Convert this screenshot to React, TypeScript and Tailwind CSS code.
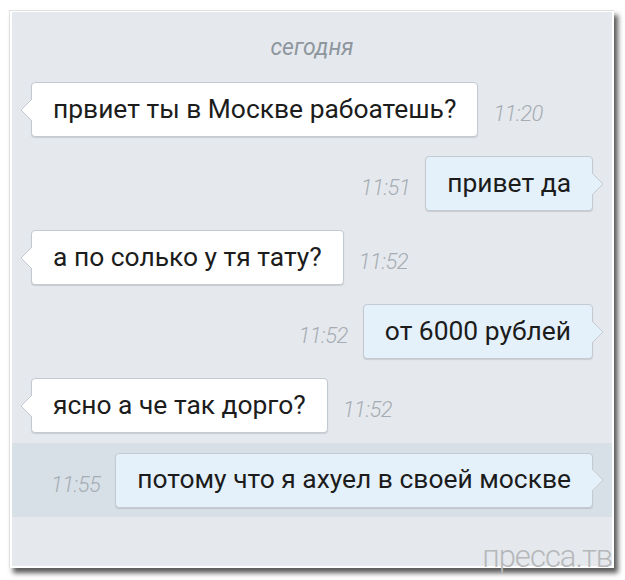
import React from "react";

type Msg = { text: string; time: string; out?: boolean };

const messages: Msg[] = [
  { text: "првиет ты в Москве рабоатешь?", time: "11:20" },
  { text: "привет да", time: "11:51", out: true },
  { text: "а по солько у тя тату?", time: "11:52" },
  { text: "от 6000 рублей", time: "11:52", out: true },
  { text: "ясно а че так дорго?", time: "11:52" },
];

function Tail({ out }: { out?: boolean }) {
  if (out) {
    return (
      <svg
        width="12"
        height="22"
        viewBox="0 0 12 22"
        className="absolute right-[-12px] top-1/2 -translate-y-1/2"
      >
        <path d="M0,0 L11,11 L0,22 Z" fill="#e4f1fa" />
        <path d="M0,0 L11,11 L0,22" fill="none" stroke="#c3cad1" strokeWidth="1" />
      </svg>
    );
  }
  return (
    <svg
      width="12"
      height="22"
      viewBox="0 0 12 22"
      className="absolute left-[-12px] top-1/2 -translate-y-1/2"
    >
      <path d="M12,0 L1,11 L12,22 Z" fill="#ffffff" />
      <path d="M12,0 L1,11 L12,22" fill="none" stroke="#c3cad1" strokeWidth="1" />
    </svg>
  );
}

function Bubble({ text, out }: { text: string; out?: boolean }) {
  return (
    <div
      className={
        out
          ? "relative h-[55px] flex items-center px-[21px] rounded-[4px] border border-[#c3cad1] bg-[#e4f1fa] shadow-[0_1px_1px_rgba(0,0,0,0.12)] text-[26.4px] text-[#1c1c1c] whitespace-nowrap"
          : "relative h-[55px] flex items-center px-[21px] rounded-[4px] border border-[#c3cad1] bg-white shadow-[0_1px_1px_rgba(0,0,0,0.12)] text-[26.4px] text-[#1c1c1c] whitespace-nowrap"
      }
    >
      {text}
      <Tail out={out} />
    </div>
  );
}

function Time({ t }: { t: string }) {
  return (
    <span className="pt-[8px] text-[22px] italic font-light text-[#a5acb3] tracking-[-0.5px]">
      {t}
    </span>
  );
}

function Row({ m }: { m: Msg }) {
  if (m.out) {
    return (
      <div className="flex items-center justify-end gap-[15px] pr-[19px]">
        <Time t={m.time} />
        <Bubble text={m.text} out />
      </div>
    );
  }
  return (
    <div className="flex items-center gap-[15px] pl-[19px]">
      <Bubble text={m.text} />
      <Time t={m.time} />
    </div>
  );
}

export default function App() {
  return (
    <div className="w-[625px] h-[580px] bg-white overflow-hidden font-[Roboto]">
      <div className="ml-[9px] mt-[10px] w-[605px] h-[558px] bg-white border-l border-t border-[#e0e0e0] pl-[2px] pt-[1px] shadow-[4px_5px_5px_rgba(0,0,0,0.65)]">
        <div className="relative w-[600px] h-[554px] bg-[#e5e9ed] flex flex-col">
          <div className="pt-[23px] text-center text-[23px] leading-[26px] italic text-[#8e969e]">
            сегодня
          </div>
          <div className="mt-[21px] flex flex-col gap-[19px]">
            {messages.map((m, i) => (
              <Row key={i} m={m} />
            ))}
          </div>
          <div className="mt-[10px] h-[74px] bg-[#d8e0e7] flex items-center justify-end gap-[15px] pr-[19px]">
            <Time t="11:55" />
            <Bubble text="потому что я ахуел в своей москве" out />
          </div>
          <div className="absolute right-0 bottom-[-6px] text-[31px] font-light leading-none text-[#b6b8ba] tracking-[-1px]">
            пресса.тв
          </div>
        </div>
      </div>
    </div>
  );
}
